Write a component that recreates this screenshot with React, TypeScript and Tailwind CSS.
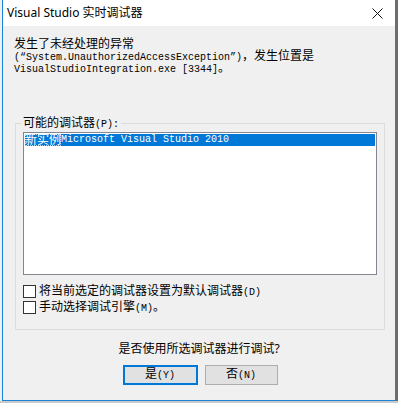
const sans = "font-['Noto_Sans','Noto_Sans_CJK_SC',sans-serif]";

function Mono({ children }: { children: React.ReactNode }) {
  return <span className="font-['Liberation_Mono',monospace] text-[10px]">{children}</span>;
}

function CheckRow({ label, hotkey, tail }: { label: string; hotkey: string; tail?: string }) {
  return (
    <div className="flex items-center h-[16px]">
      <div className="w-[13px] h-[13px] border border-[#333333] bg-white" />
      <span className="ml-[3px] text-[12px] leading-[13px]">
        {label}
        <Mono>({hotkey})</Mono>
        {tail}
      </span>
    </div>
  );
}

export default function App() {
  return (
    <div className={`w-[398px] h-[403px] bg-[#c9c9c9] ${sans} text-black`}>
      <div className="flex h-[401px]">
        <div className="w-[2px] bg-[#f0f0f0]" />
        <div className="w-[394px] h-[401px] border-x border-b border-[#1883d7] bg-[#f0f0f0] flex flex-col">
          {/* title bar */}
          <div className="h-[26px] bg-white flex items-center justify-between pl-[4px] pr-[12px]">
            <span className="text-[12px] leading-[14px]">Visual Studio 实时调试器</span>
            <svg width="11" height="11" viewBox="0 0 11 11">
              <path d="M0.5 0.5 L10.5 10.5 M10.5 0.5 L0.5 10.5" stroke="#111" strokeWidth="1" />
            </svg>
          </div>

          {/* message */}
          <div className="pl-[11px] pt-[12px] text-[12px] leading-[12px]">
            <div className="h-[12px]">发生了未经处理的异常</div>
            <div className="h-[12px]">
              <Mono>(“System.UnauthorizedAccessException”)</Mono>，发生位置是
            </div>
            <div className="h-[12px]">
              <Mono>VisualStudioIntegration.exe [3344]</Mono>。
            </div>
          </div>

          {/* group box */}
          <div className="relative mt-[49px] ml-[12px] mr-[10px] border border-[#dcdcdc] pt-[8px] pl-[7px] pr-[7px] pb-[14px]">
            <span className="absolute -top-[7px] left-[5px] bg-[#f0f0f0] px-[2px] text-[12px] leading-[12px]">
              可能的调试器<Mono>(P):</Mono>
            </span>
            <div className="h-[143px] border border-[#828790] bg-white p-px">
              <div className="h-[12px] bg-[#0078d7] text-white text-[12px] leading-[12px] flex">
                <span className="outline outline-1 outline-dotted outline-white/70 -outline-offset-1">新实例</span>
                <Mono>Microsoft Visual Studio 2010</Mono>
              </div>
            </div>
            <div className="mt-[8px] flex flex-col">
              <CheckRow label="将当前选定的调试器设置为默认调试器" hotkey="D" />
              <CheckRow label="手动选择调试引擎" hotkey="M" tail="。" />
            </div>
          </div>

          {/* question */}
          <div className="mt-[12px] text-center text-[12px] leading-[14px]">是否使用所选调试器进行调试?</div>

          {/* buttons */}
          <div className="mt-[9px] flex justify-center gap-[7px] pl-[2px]">
            <button className="w-[75px] h-[20px] border-2 border-[#0078d7] bg-[#e1e1e1] text-[12px] leading-[12px]">
              是<Mono>(Y)</Mono>
            </button>
            <button className="w-[73px] h-[20px] border border-[#adadad] bg-[#e1e1e1] text-[12px] leading-[12px]">
              否<Mono>(N)</Mono>
            </button>
          </div>
        </div>
        <div className="w-[2px] bg-[#6d6d6d]" />
      </div>
    </div>
  );
}
